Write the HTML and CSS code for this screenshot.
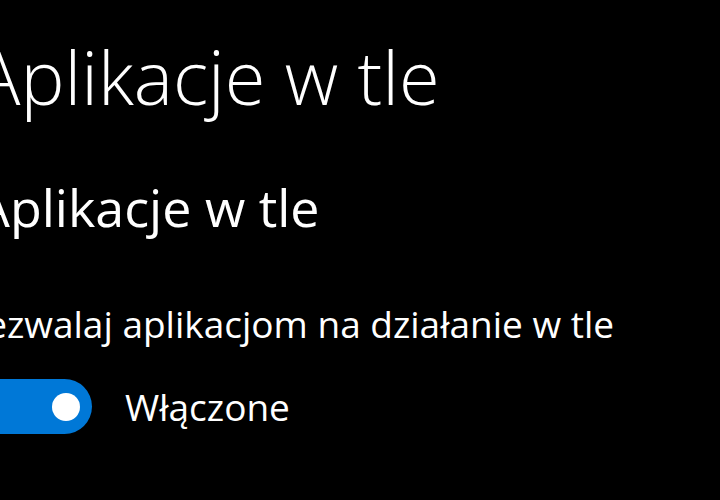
FILE: index.html
```html
<!DOCTYPE html>
<html lang="pl">
<head>
<meta charset="utf-8">
<link rel="stylesheet" href="styles.css">
</head>
<body>
<main class="page">
  <h1 class="title">Aplikacje w tle</h1>
  <h2 class="subtitle">Aplikacje w tle</h2>
  <p class="label">Zezwalaj aplikacjom na działanie w tle</p>
  <div class="toggle-row">
    <span class="toggle" role="switch" aria-checked="true"><span class="knob"></span></span>
    <span class="state">Włączone</span>
  </div>
</main>
</body>
</html>
```
FILE: styles.css
```css
html, body {
  margin: 0;
  padding: 0;
  background: #000;
  width: 720px;
  height: 500px;
  overflow: hidden;
}
.page {
  color: #fff;
  font-family: "Open Sans", "Noto Sans", sans-serif;
  padding-top: 32px;
}
.title {
  margin: 0 0 0 -24px;
  font-size: 74px;
  font-weight: 300;
  line-height: 90px;
  white-space: nowrap;
}
.subtitle {
  margin: 55px 0 0 -23px;
  font-size: 52px;
  font-weight: 400;
  line-height: 60px;
  white-space: nowrap;
}
.label {
  margin: 65px 0 0 -35px;
  font-size: 37px;
  font-weight: 400;
  line-height: 44px;
  white-space: nowrap;
}
.toggle-row {
  margin-top: 33px;
  display: flex;
  align-items: center;
  gap: 33px;
}
.toggle {
  width: 92px;
  height: 55px;
  background: #0078d7;
  border-radius: 0 27.5px 27.5px 0;
  display: flex;
  align-items: center;
  justify-content: flex-end;
  padding-right: 12px;
  box-sizing: border-box;
}
.knob {
  width: 28px;
  height: 28px;
  border-radius: 50%;
  background: #fff;
}
.state {
  font-size: 37px;
  line-height: 44px;
}
```
